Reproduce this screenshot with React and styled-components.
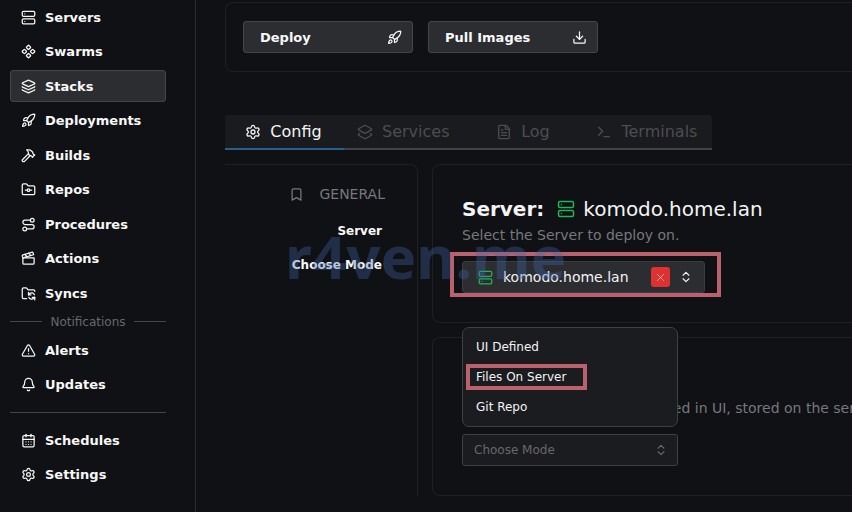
import React, { useState } from "react";
import styled, { createGlobalStyle } from "styled-components";
import {
  Server,
  Component,
  Layers,
  Rocket,
  Hammer,
  FolderGit,
  Route,
  Clapperboard,
  FolderSync,
  TriangleAlert,
  Bell,
  CalendarDays,
  Settings,
  Download,
  Layers2,
  FileText,
  Terminal,
  Bookmark,
  X,
  ChevronsUpDown,
} from "lucide-react";

const GlobalStyle = createGlobalStyle`
  * {
    box-sizing: border-box;
  }

  body {
    margin: 0;
    background: #101114;
    color: #f4f4f5;
    font-family: "DejaVu Sans", Verdana, sans-serif;
    font-size: 13px;
    overflow: hidden;
  }

  button {
    font-family: inherit;
    cursor: pointer;
  }
`;

const RESOURCES = [
  { name: "Servers", icon: Server },
  { name: "Swarms", icon: Component },
  { name: "Stacks", icon: Layers },
  { name: "Deployments", icon: Rocket },
  { name: "Builds", icon: Hammer },
  { name: "Repos", icon: FolderGit },
  { name: "Procedures", icon: Route },
  { name: "Actions", icon: Clapperboard },
  { name: "Syncs", icon: FolderSync },
];

const NOTIFICATIONS = [
  { name: "Alerts", icon: TriangleAlert },
  { name: "Updates", icon: Bell },
];

const SYSTEM = [
  { name: "Schedules", icon: CalendarDays },
  { name: "Settings", icon: Settings },
];

const TABS = [
  { name: "Config", icon: Settings },
  { name: "Services", icon: Layers2 },
  { name: "Log", icon: FileText },
  { name: "Terminals", icon: Terminal },
];

const MODES = ["UI Defined", "Files On Server", "Git Repo"];

const NavLinks = ({ items, active }) =>
  items.map(({ name, icon: Icon }) => (
    <NavLink key={name} href={`#${name.toLowerCase()}`} $active={name === active}>
      <Icon size={15} />
      {name}
    </NavLink>
  ));

const App = () => {
  const [tab, setTab] = useState("Config");

  return (
    <Page>
      <GlobalStyle />
      <Sidebar>
        <ResourceNav>
          <NavLinks items={RESOURCES} active="Stacks" />
        </ResourceNav>
        <SectionLabel>Notifications</SectionLabel>
        <NavGroup>
          <NavLinks items={NOTIFICATIONS} />
        </NavGroup>
        <Divider />
        <NavGroup>
          <NavLinks items={SYSTEM} />
        </NavGroup>
      </Sidebar>

      <Main>
        <Actions>
          <ActionButton type="button">
            Deploy
            <Rocket size={15} />
          </ActionButton>
          <ActionButton type="button">
            Pull Images
            <Download size={15} />
          </ActionButton>
        </Actions>

        <Tabs role="tablist">
          {TABS.map(({ name, icon: Icon }) => (
            <Tab
              key={name}
              type="button"
              role="tab"
              aria-selected={tab === name}
              $active={tab === name}
              onClick={() => setTab(name)}
            >
              <Icon size={16} />
              {name}
            </Tab>
          ))}
        </Tabs>

        <ConfigGrid>
          <Outline>
            <OutlineTitle>
              <Bookmark size={15} />
              GENERAL
            </OutlineTitle>
            <OutlineLink href="#server">Server</OutlineLink>
            <OutlineLink href="#choose-mode">Choose Mode</OutlineLink>
          </Outline>

          <Sections>
            <Card id="server">
              <CardTitle>
                <strong>Server:</strong>
                <Server size={18} color="#22b455" />
                komodo.home.lan
              </CardTitle>
              <CardText>Select the Server to deploy on.</CardText>
              <Highlight>
                <ServerSelect>
                  <ServerTrigger type="button">
                    <Server size={15} color="#22b455" />
                    komodo.home.lan
                  </ServerTrigger>
                  <ClearButton type="button" aria-label="Clear server">
                    <X size={13} strokeWidth={1} />
                  </ClearButton>
                  <OpenButton type="button" aria-label="Open servers">
                    <ChevronsUpDown size={14} />
                  </OpenButton>
                </ServerSelect>
              </Highlight>
            </Card>

            <Card id="choose-mode">
              <ModeText>Will the file contents get defined in UI, stored on the server</ModeText>
              <ModePicker>
                <ModeMenu role="listbox" aria-label="Choose Mode">
                  {MODES.map((mode) => (
                    <ModeOption
                      key={mode}
                      type="button"
                      role="option"
                      aria-selected={false}
                      $marked={mode === "Files On Server"}
                    >
                      {mode}
                    </ModeOption>
                  ))}
                </ModeMenu>
                <ModeTrigger type="button" aria-haspopup="listbox" aria-expanded="true">
                  Choose Mode
                  <ChevronsUpDown size={14} />
                </ModeTrigger>
              </ModePicker>
            </Card>
          </Sections>
          <Watermark>r4ven.me</Watermark>
        </ConfigGrid>
      </Main>
    </Page>
  );
};

const Page = styled.div`
  display: flex;
  min-height: 100vh;
`;

const Sidebar = styled.aside`
  flex: 0 0 196px;
  display: flex;
  flex-direction: column;
  padding: 1px 29px 0 10px;
  border-right: 1px solid #2b2c30;
`;

const NavGroup = styled.nav`
  display: flex;
  flex-direction: column;
  gap: 2px;
`;

const ResourceNav = styled(NavGroup)`
  justify-content: space-between;
  gap: 0;
  height: 308px;
`;

const NavLink = styled.a`
  display: flex;
  align-items: center;
  gap: 9px;
  height: 32px;
  padding: 0 10px;
  border: 1px solid ${({ $active }) => ($active ? "#45464b" : "transparent")};
  border-radius: 3px;
  background: ${({ $active }) => ($active ? "#2c2d31" : "transparent")};
  color: #f8f8f8;
  font-size: 13px;
  font-weight: 700;
  text-decoration: none;
`;

const SectionLabel = styled.div`
  display: flex;
  align-items: center;
  gap: 8px;
  height: 25px;
  color: #67686c;
  font-size: 12px;

  &::before,
  &::after {
    content: "";
    flex: 1;
    height: 1px;
    background: #45464a;
  }
`;

const Divider = styled.hr`
  width: 100%;
  height: 1px;
  margin: 12px 0 11px;
  border: none;
  background: #45464a;
`;

const Main = styled.main`
  flex: 1;
  min-width: 0;
  padding: 2px 0 16px 29px;
`;

const Actions = styled.section`
  display: flex;
  gap: 15px;
  height: 70px;
  padding: 18px 17px;
  border: 1px solid #1f2024;
  border-right: none;
  border-radius: 8px 0 0 8px;
`;

const ActionButton = styled.button`
  display: flex;
  align-items: center;
  justify-content: space-between;
  width: 170px;
  height: 32px;
  padding: 0 10px 0 16px;
  border: 1px solid #45464b;
  border-radius: 3px;
  background: #2c2d31;
  color: #f8f8f8;
  font-size: 13px;
  font-weight: 700;
`;

const Tabs = styled.div`
  display: flex;
  width: max-content;
  margin: 43px 0 14px;
  border-radius: 3px 3px 0 0;
  background: #1a1b1e;
`;

const Tab = styled.button`
  display: flex;
  align-items: center;
  justify-content: center;
  gap: 9px;
  min-width: 119px;
  height: 35px;
  padding: 0 15px 0 13px;
  border: none;
  border-bottom: 2px solid ${({ $active }) => ($active ? "#27608d" : "#424347")};
  background: transparent;
  color: ${({ $active }) => ($active ? "#f4f4f5" : "#4c4d51")};
  font-size: 16px;
`;

const ConfigGrid = styled.div`
  position: relative;
  display: grid;
  grid-template-columns: 193px minmax(0, 1fr);
  gap: 14px;
`;

const Outline = styled.nav`
  display: flex;
  flex-direction: column;
  align-items: flex-end;
  padding: 15px 32px 0 0;
  border-top: 1px solid #1f2024;
  border-right: 1px solid #1f2024;
  border-radius: 0 8px 0 0;
`;

const OutlineTitle = styled.div`
  display: flex;
  align-items: center;
  gap: 15px;
  height: 28px;
  margin-bottom: 7px;
  color: #77787c;
  font-size: 14px;
`;

const OutlineLink = styled.a`
  height: 34px;
  padding-right: 3px;
  color: #f8f8f8;
  font-size: 12px;
  font-weight: 700;
  line-height: 32px;
  text-decoration: none;
`;

const Sections = styled.div`
  display: grid;
  gap: 14px;
`;

const Card = styled.section`
  height: 159px;
  padding: 29px 0 0 29px;
  border: 1px solid #1f2024;
  border-right: none;
  border-radius: 8px 0 0 8px;
`;

const CardTitle = styled.h2`
  display: flex;
  align-items: center;
  gap: 8px;
  height: 30px;
  margin: 0;
  font-size: 20px;
  font-weight: 400;

  strong {
    margin-right: 5px;
  }
`;

const CardText = styled.p`
  margin: 0;
  color: #77787c;
  font-size: 14px;
  line-height: 22px;
  white-space: nowrap;
`;

const Highlight = styled.div`
  width: max-content;
  margin: 6px 0 0 -12px;
  padding: 5px 12px 0 8px;
  border: 4px solid #b9616c;
`;

const ServerSelect = styled.div`
  display: flex;
  align-items: center;
  width: 243px;
  height: 32px;
  padding: 0 11px 0 15px;
  border: 1px solid #3b3c41;
  border-radius: 3px;
  background: #2c2d31;
`;

const ServerTrigger = styled.button`
  display: flex;
  flex: 1;
  align-items: center;
  gap: 10px;
  padding: 0;
  border: none;
  background: none;
  color: #f4f4f5;
  font-size: 14px;
`;

const ClearButton = styled.button`
  display: grid;
  place-items: center;
  width: 19px;
  height: 20px;
  margin-right: 9px;
  padding: 0;
  border: none;
  border-radius: 3px;
  background: #e03131;
  color: #fff;
`;

const OpenButton = styled.button`
  display: grid;
  padding: 0;
  border: none;
  background: none;
  color: #f4f4f5;
`;

const ModeText = styled(CardText)`
  margin-top: 30px;
  overflow: hidden;
`;

const ModePicker = styled.div`
  position: relative;
  width: 216px;
  margin-top: 15px;
`;

const ModeMenu = styled.div`
  position: absolute;
  bottom: 39px;
  left: 0;
  width: 100%;
  height: 100px;
  padding: 4px 3px;
  border: 1px solid #3f4045;
  border-radius: 7px;
  background: #1b1c20;
`;

const ModeOption = styled.button`
  display: block;
  width: 121px;
  height: 26px;
  margin: 2px 0 4px;
  padding: 0 6px;
  border: 4px solid ${({ $marked }) => ($marked ? "#b9616c" : "transparent")};
  background: transparent;
  color: #f4f4f5;
  font-size: 12px;
  line-height: 16px;
  text-align: left;
`;

const ModeTrigger = styled.button`
  display: flex;
  align-items: center;
  justify-content: space-between;
  width: 100%;
  height: 32px;
  padding: 0 9px 0 11px;
  border: 1px solid #3f4045;
  border-radius: 3px;
  background: #1b1c20;
  color: #67686c;
  font-size: 12px;
`;

const Watermark = styled.div`
  position: absolute;
  top: 52px;
  left: 60px;
  color: rgba(64, 104, 172, 0.34);
  font-family: "Noto Sans", sans-serif;
  font-size: 60px;
  font-weight: 700;
  line-height: 80px;
  pointer-events: none;
`;

export default App;
